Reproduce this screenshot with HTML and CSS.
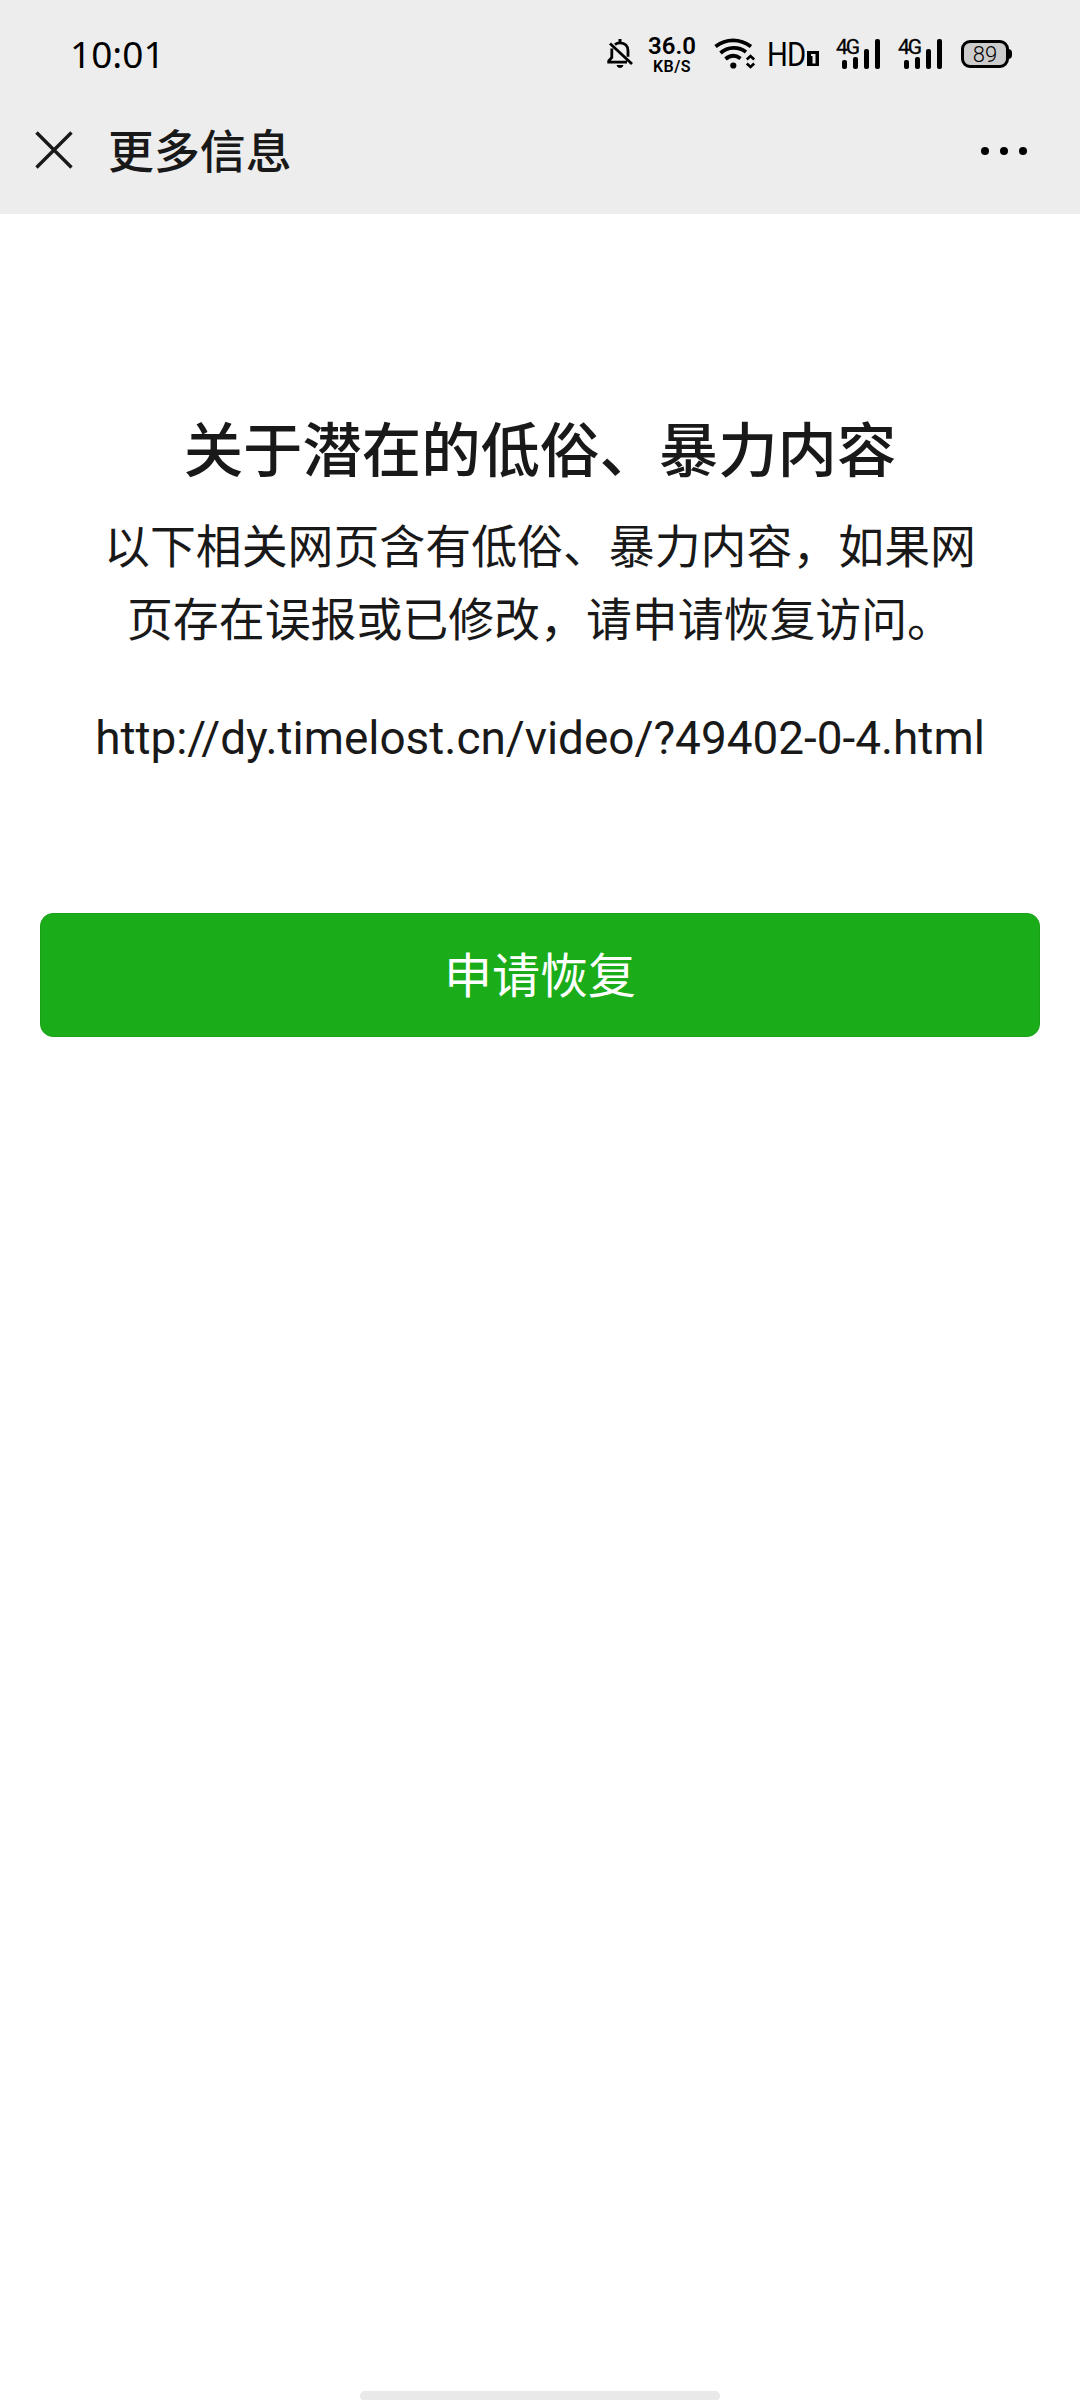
FILE: index.html
```
<!DOCTYPE html>
<html lang="zh-CN">
<head>
    <meta charset="UTF-8">
    <meta name="viewport" content="width=device-width, initial-scale=1.0">
    <title>更多信息</title>
    <link rel="stylesheet" href="styles.css">
</head>
<body>
    <header class="header">
        <div class="status-bar">
            <div class="time">10:01</div>
            <div class="status-icons">
                <!-- Muted bell -->
                <svg class="bell" width="26" height="32" viewBox="0 0 26 32" fill="none" stroke="#000" stroke-width="2.8">
                    <path d="M8 6.600C9.500 5.300 11 4.800 13 4.800c5 0 8 3.300 8 8v6M4.800 10.500v9L1.700 23v1.200H20M3 5.500L25 26"/>
                    <path d="M13 1v4" stroke-width="3"/>
                    <path d="M10 27.500h6l-1.400 1.800h-3.200z" fill="#000" stroke-width="1"/>
                </svg>
                <div class="speed">
                    <span class="speed-value">36.0</span>
                    <span class="speed-unit">KB/S</span>
                </div>
                <svg class="wifi" width="42" height="32" viewBox="0 0 42 32" fill="none" stroke="#000" stroke-width="3.8">
                    <path d="M1.500 8.500C12 .2 26 .2 37 8.500"/>
                    <path d="M6.500 15C14 8.400 24.500 8.400 32 14"/>
                    <path d="M11.500 21C16.500 16.800 21.500 16.800 26.500 20.500"/>
                    <circle cx="19.300" cy="27.500" r="3.100" fill="#000" stroke="none"/>
                    <path d="M32.800 21.500L36.500 18l3.700 3.500M32.800 25.500l3.700 3.500 3.700-3.500" stroke-width="2.600"/>
                </svg>
                <div class="hd">
                    <span class="hd-text">HD</span>
                    <svg width="12" height="15" viewBox="0 0 12 15"><path fill="#000" fill-rule="evenodd" d="M0 0h12v15H0zM4 3v2h1.500v7.500h3V3z"/></svg>
                </div>
                <div class="signal">
                    <span class="signal-type">4G</span>
                    <i class="bar bar-1"></i><i class="bar bar-2"></i><i class="bar bar-3"></i><i class="bar bar-4"></i>
                </div>
                <div class="signal">
                    <span class="signal-type">4G</span>
                    <i class="bar bar-1"></i><i class="bar bar-2"></i><i class="bar bar-3"></i><i class="bar bar-4"></i>
                </div>
                <div class="battery">89</div>
            </div>
        </div>
        <nav class="nav">
            <svg class="close" width="38" height="38" viewBox="0 0 38 38" fill="none" stroke="#191919" stroke-width="3.4">
                <path d="M1.500 1.500l35 35M36.500 1.500l-35 35"/>
            </svg>
            <div class="nav-title">更多信息</div>
            <div class="more"><i></i><i></i><i></i></div>
        </nav>
    </header>
    <main class="content">
        <h1 class="title">关于潜在的低俗、暴力内容</h1>
        <p class="desc">以下相关网页含有低俗、暴力内容，如果网<br>页存在误报或已修改，请申请恢复访问。</p>
        <p class="url">http://dy.timelost.cn/video/?49402-0-4.html</p>
        <button class="btn">申请恢复</button>
    </main>
    <div class="home-bar"></div>
</body>
</html>
```
FILE: styles.css
```
* {
    box-sizing: border-box;
}

body {
    margin: 0;
    height: 2400px;
    display: flex;
    flex-direction: column;
    overflow: hidden;
    background: #fff;
    color: #191919;
    font-family: Roboto, "Noto Sans CJK SC", sans-serif;
}

.header {
    height: 214px;
    background: #ededed;
}

/* Status bar */
.status-bar {
    height: 108px;
    padding: 0 68px 0 70px;
    display: flex;
    justify-content: space-between;
    align-items: flex-start;
    color: #000;
}

.time {
    font-family: "Noto Sans", sans-serif;
    font-size: 37px;
    line-height: 52px;
    padding-top: 28px;
}

.status-icons {
    display: flex;
    padding-top: 34px;
}

.bell {
    margin: 4px 14px 0 1px;
}

.speed {
    width: 50px;
    margin-right: 17px;
    display: flex;
    flex-direction: column;
    align-items: center;
    font-weight: 600;
}

.speed-value {
    font-size: 24px;
    line-height: 24px;
}

.speed-unit {
    font-size: 16px;
    line-height: 17px;
    letter-spacing: 0.5px;
}

.wifi {
    margin: 4px 14px 0 0;
}

.hd {
    display: flex;
    width: 50px;
    height: 40px;
    margin-right: 17px;
    align-items: flex-start;
}

.hd-text {
    width: 42px;
    margin-left: -3px;
    margin-right: -2px;
    font-size: 34px;
    line-height: 41px;
    letter-spacing: -1px;
    transform: scaleX(0.86);
    transform-origin: left;
}

.hd svg {
    flex-shrink: 0;
    margin-top: 17px;
}

.signal {
    position: relative;
    display: flex;
    align-items: flex-end;
    gap: 6px;
    width: 44px;
    height: 35px;
    padding-left: 5px;
    margin-right: 18px;
}

.signal-type {
    position: absolute;
    left: -1px;
    top: 4px;
    font-size: 21px;
    line-height: 19px;
    letter-spacing: -2px;
    -webkit-text-stroke: 0.3px #000;
}

.bar {
    width: 5px;
    border-radius: 2px;
    background: #000;
    flex-shrink: 0;
}

.bar-1 { height: 9px; }
.bar-2 { height: 12px; }
.bar-3 { height: 20px; }
.bar-4 { height: 30px; }

.battery {
    position: relative;
    width: 48px;
    height: 28px;
    margin: 6px 3px 0 0;
    border: 3px solid #000;
    border-radius: 9px;
    background: #ccc;
    font-size: 22px;
    font-weight: 300;
    line-height: 23px;
    text-align: center;
}

.battery::after {
    content: "";
    position: absolute;
    right: -6px;
    top: 6px;
    width: 4px;
    height: 10px;
    border-radius: 0 4px 4px 0;
    background: #000;
}

/* Title bar */
.nav {
    display: flex;
    align-items: center;
    height: 84px;
    padding: 0 53px 0 35px;
}

.nav-title {
    margin-left: 35px;
    padding-top: 3px;
    font-size: 45.9px;
    font-weight: 500;
    line-height: 66px;
}

.more {
    display: flex;
    gap: 11px;
    margin-left: auto;
    padding-top: 1px;
}

.more i {
    width: 8px;
    height: 8px;
    border-radius: 50%;
    background: #000;
}

/* Page content */
.content {
    flex: 1;
    padding: 194px 40px 0;
    text-align: center;
}

.title {
    margin: 0;
    font-size: 59.4px;
    font-weight: 500;
    line-height: 88px;
}

.desc {
    margin: 15px 0 0;
    font-size: 45.9px;
    line-height: 73px;
}

.url {
    margin: 45px 0 0;
    font-size: 45.9px;
    line-height: 73px;
}

.btn {
    display: block;
    width: 1000px;
    height: 124px;
    margin: 138px 0 0;
    padding: 0 0 6px;
    border: 1px solid #18a117;
    border-radius: 13px;
    background: #1aad19;
    color: #fff;
    font-family: inherit;
    font-size: 48px;
}

.home-bar {
    width: 360px;
    height: 9px;
    margin: 0 auto;
    border-radius: 5px 5px 4px 4px;
    background: #e9e9e9;
}
```
